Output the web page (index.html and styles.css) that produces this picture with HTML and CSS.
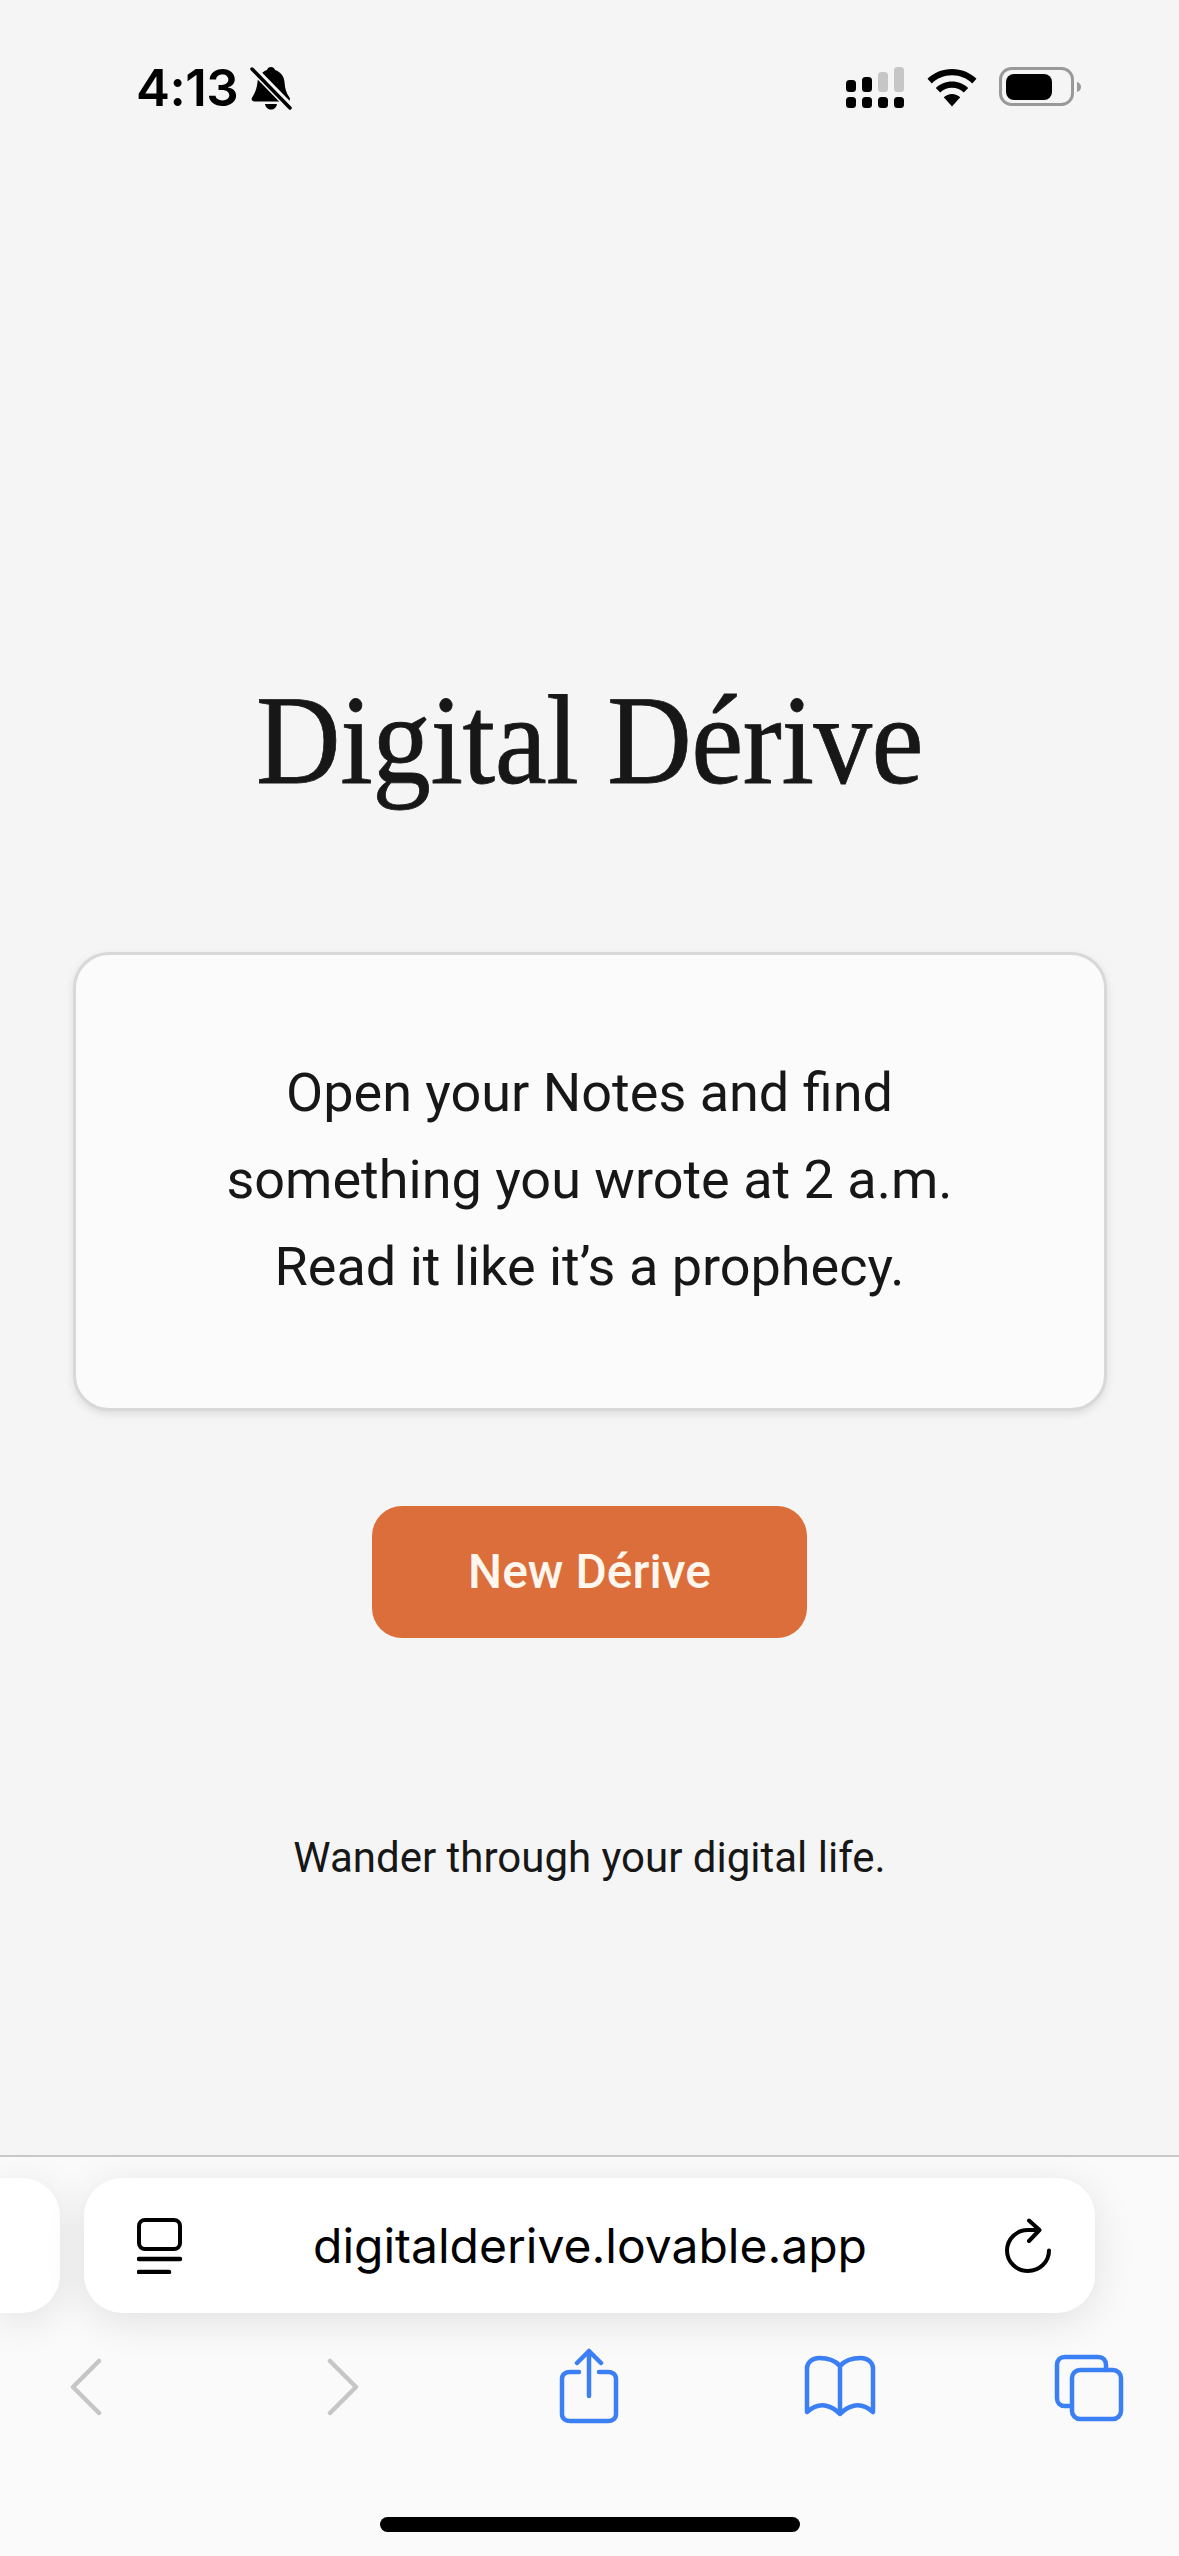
FILE: index.html
```html
<!DOCTYPE html>
<html lang="en">
<head>
<meta charset="utf-8">
<title>Digital Dérive</title>
<link rel="stylesheet" href="styles.css">
</head>
<body>
<div class="screen">
  <header class="status">
    <div class="status-left">
      <span class="time">4:13</span>
      <svg class="bell" width="42" height="44" viewBox="0 0 42 44">
        <path d="M21 1c2 0 3.500 1.300 4 3 6 2 9 6.500 9.500 12 .4 6 1.500 11 5 15.500 1 1.500.3 4-2 4H4.500c-2.300 0-3.500-2-2.500-3.700C5 27 7 22 7.500 16 8 10.500 11.500 6 17 4c.5-1.700 2-3 4-3z"/>
        <path d="M15 38h12c-.5 3.500-3 5.500-6 5.500s-5.500-2-6-5.500z"/>
        <path class="bell-gap" d="M2 2l38 39"/>
        <path class="bell-slash" d="M2 3l38 39"/>
      </svg>
    </div>
    <div class="status-right">
      <svg class="signal" width="58" height="42" viewBox="0 0 58 42">
        <rect x="0" y="13" width="10" height="12" rx="3.500"/>
        <rect x="16" y="10" width="10" height="15" rx="3.500"/>
        <rect class="dim" x="32" y="5" width="10" height="20" rx="3.500"/>
        <rect class="dim" x="48" y="0" width="10" height="25" rx="3.500"/>
        <rect x="0" y="30" width="10" height="11" rx="3.500"/>
        <rect x="16" y="30" width="10" height="11" rx="3.500"/>
        <rect x="32" y="30" width="10" height="11" rx="3.500"/>
        <rect x="48" y="30" width="10" height="11" rx="3.500"/>
      </svg>
      <svg class="wifi" width="50" height="38" viewBox="0 0 50 38">
        <path d="M25 0C15.500 0 7 3.600.5 9.800l4.300 4.600C10 9.300 17 6.300 25 6.300s15 3 20.200 8.100l4.300-4.600C43 3.600 34.500 0 25 0z"/>
        <path d="M25 12.500c-6.300 0-12 2.500-16.200 6.500l4.400 4.600c3-2.900 7.200-4.800 11.800-4.800s8.800 1.900 11.800 4.800l4.400-4.600C37 15 31.300 12.500 25 12.500z"/>
        <path d="M25 25c-3.200 0-6.100 1.300-8.200 3.300L25 37.500l8.200-9.200C31.100 26.300 28.200 25 25 25z"/>
      </svg>
      <svg class="battery" width="83" height="40" viewBox="0 0 83 40">
        <rect class="batt-shell" x="1.500" y="1.500" width="72" height="36" rx="11"/>
        <rect x="7" y="7" width="46" height="26" rx="8"/>
        <path class="batt-cap" d="M78 15c2.500.8 4 2.500 4 5s-1.500 4.200-4 5z"/>
      </svg>
    </div>
  </header>

  <main class="page">
    <h1 class="title">Digital Dérive</h1>
    <section class="card">
      <p class="prompt">Open your Notes and find<br>something you wrote at 2 a.m.<br>Read it like it’s a prophecy.</p>
    </section>
    <button class="cta" type="button">New Dérive</button>
    <p class="tagline">Wander through your digital life.</p>
  </main>

  <footer class="toolbar">
    <div class="address-row">
      <div class="tab-peek"></div>
      <div class="address">
        <svg class="tab-icon" width="46" height="56" viewBox="0 0 46 56">
          <rect x="2" y="2" width="41" height="29" rx="6"/>
          <path class="tab-lines" d="M2 41h41M2 54h30"/>
        </svg>
        <span class="url">digitalderive.lovable.app</span>
        <svg class="reload" width="48" height="56" viewBox="0 0 48 56">
          <path d="M45 32.500c0 11.500-9.500 20.500-21 20.500S3 44 3 32.500 12.500 12 24 12h10"/>
          <path d="M25 2.500l10.500 9.500L25 23"/>
        </svg>
      </div>
    </div>
    <nav class="nav">
      <svg class="nav-icon dim-stroke back" width="32" height="58" viewBox="0 0 32 58">
        <path d="M29 3L3 29l26 26"/>
      </svg>
      <svg class="nav-icon dim-stroke forward" width="32" height="58" viewBox="0 0 32 58">
        <path d="M3 3l26 26L3 55"/>
      </svg>
      <svg class="nav-icon blue share" width="60" height="76" viewBox="0 0 60 76">
        <path d="M20 24h-9c-4.500 0-8 2.500-8 7v35c0 4.500 3.500 7 8 7h38c4.500 0 8-2.500 8-7V31c0-4.500-3.500-7-8-7h-9"/>
        <path d="M30 3v45M18 15L30 3l12 12"/>
      </svg>
      <svg class="nav-icon blue book" width="74" height="64" viewBox="0 0 74 64">
        <path d="M37 11C32 5 24 3 16 3 9 3 4 8 4 13v44c7-6 13-8 20-6 6 1.500 10 5 13 8 3-3 7-6.500 13-8 7-2 13 0 20 6V13c0-5-5-10-12-10-8 0-16 2-21 8zM37 11v48"/>
      </svg>
      <svg class="nav-icon blue tabs" width="70" height="68" viewBox="0 0 70 68">
        <path d="M52 16v-5c0-5-3-8-8-8H11c-5 0-8 3-8 8v33c0 5 3 8 8 8h7"/>
        <rect x="18" y="16" width="49" height="49" rx="8"/>
      </svg>
    </nav>
    <div class="home-indicator"></div>
  </footer>
</div>
</body>
</html>
```

FILE: styles.css
```css
* {
  box-sizing: border-box;
}

html,
body {
  margin: 0;
  padding: 0;
}

body {
  background: #f5f5f5;
  font-family: Roboto, "Liberation Sans", sans-serif;
  color: #171717;
}

.screen {
  width: 1179px;
  height: 2556px;
  display: flex;
  flex-direction: column;
  overflow: hidden;
}

/* status bar */
.status {
  height: 120px;
  padding: 66px 97px 0 136px;
  display: flex;
  justify-content: space-between;
  align-items: flex-start;
  flex: none;
}

.status-left {
  display: flex;
  align-items: center;
  gap: 12px;
}

.time {
  font-family: Inter, "Liberation Sans", sans-serif;
  font-weight: 600;
  font-size: 51px;
  line-height: 44px;
  color: #000;
  letter-spacing: -0.5px;
}

.bell {
  display: block;
  fill: #000;
}

.bell-gap {
  fill: none;
  stroke: #f5f5f5;
  stroke-width: 8;
}

.bell-slash {
  fill: none;
  stroke: #000;
  stroke-width: 3.500;
  stroke-linecap: round;
}

.status-right {
  display: flex;
  align-items: flex-start;
  gap: 23px;
  padding-top: 1px;
}

.signal {
  display: block;
  fill: #000;
}

.signal .dim {
  fill: #c6c6c6;
}

.wifi {
  display: block;
  fill: #000;
  margin-top: 2px;
}

.battery {
  display: block;
  fill: #000;
  margin-top: 0;
  margin-left: -1px;
}

.batt-shell {
  fill: none;
  stroke: #999;
  stroke-width: 3;
}

.batt-cap {
  fill: #999;
}

/* page content */
.page {
  flex: 1;
  display: flex;
  flex-direction: column;
  align-items: center;
  padding: 549px 73px 0;
}

.title {
  margin: 0;
  font-family: "Liberation Serif", serif;
  font-weight: 400;
  font-size: 126px;
  line-height: 144px;
  letter-spacing: -0.5px;
  color: #171717;
  white-space: nowrap;
  -webkit-text-stroke: 0.8px #171717;
  transform: scaleX(0.93);
}

.card {
  width: 1034px;
  flex: none;
  align-self: flex-start;
  height: 459px;
  margin-top: 139px;
  padding: 0 1px 4px 0;
  display: flex;
  align-items: center;
  justify-content: center;
  background: #fbfbfb;
  border: 3px solid #d8d8d8;
  border-radius: 36px;
  box-shadow: 0 3px 8px rgba(0, 0, 0, 0.1);
}

.prompt {
  margin: 0;
  font-size: 54px;
  line-height: 87px;
  text-align: center;
  color: #171717;
}

.cta {
  width: 435px;
  height: 132px;
  margin-top: 95px;
  padding: 0 0 2px;
  border: 0;
  border-radius: 30px;
  background: #db6e3a;
  color: #fff6ee;
  font-family: Roboto, "Liberation Sans", sans-serif;
  font-weight: 500;
  font-size: 48px;
}

.tagline {
  margin: 186px 0 0;
  font-size: 42px;
  line-height: 68px;
  color: #171717;
}

/* browser toolbar */
.toolbar {
  height: 401px;
  flex: none;
  background: #fafafa;
  border-top: 2px solid #c9c9c9;
  display: flex;
  flex-direction: column;
}

.address-row {
  display: flex;
  gap: 24px;
  margin-top: 21px;
  height: 135px;
}

.tab-peek {
  width: 60px;
  border-radius: 0 38px 38px 0;
  background: #fff;
  box-shadow: 0 8px 40px rgba(0, 0, 0, 0.1);
}

.address {
  width: 1011px;
  display: flex;
  align-items: center;
  justify-content: space-between;
  padding: 0 43px 0 53px;
  border-radius: 38px;
  background: #fff;
  box-shadow: 0 8px 40px rgba(0, 0, 0, 0.1);
}

.tab-icon {
  fill: none;
  stroke: #000;
  stroke-width: 4;
  stroke-linecap: round;
}

.tab-lines {
  stroke-width: 4.500;
}

.url {
  margin-right: 7px;
  font-family: Inter, "Liberation Sans", sans-serif;
  font-size: 48px;
  color: #000;
}

.reload {
  fill: none;
  stroke: #000;
  stroke-width: 4;
  stroke-linecap: round;
  stroke-linejoin: round;
}

.nav {
  position: relative;
  height: 204px;
}

.nav-icon {
  position: absolute;
  fill: none;
  stroke-width: 4.500;
  stroke-linecap: round;
  stroke-linejoin: round;
}

.dim-stroke {
  stroke: #c6c6c6;
}

.blue {
  stroke: #3b7ff5;
}

.back {
  left: 70px;
  top: 45px;
}

.forward {
  left: 327px;
  top: 45px;
}

.share {
  left: 559px;
  top: 35px;
}

.book {
  left: 803px;
  top: 42px;
}

.tabs {
  left: 1054px;
  top: 41px;
}

.home-indicator {
  width: 420px;
  height: 15px;
  margin: 0 auto;
  border-radius: 8px;
  background: #000;
}
```
